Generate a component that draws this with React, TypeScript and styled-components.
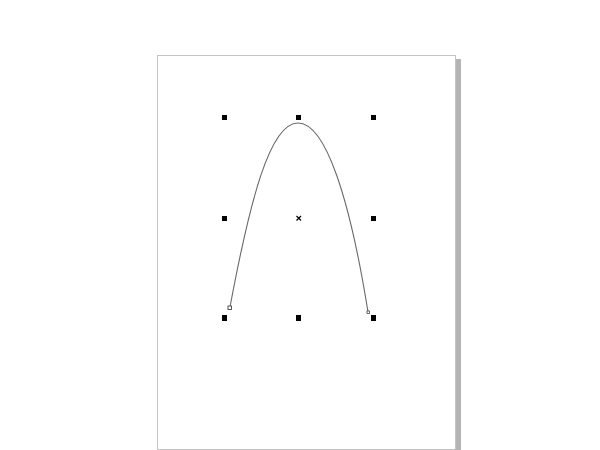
import React from "react";
import styled, { createGlobalStyle } from "styled-components";

const Global = createGlobalStyle`
  html, body { margin: 0; padding: 0; background: #ffffff; overflow: hidden; }
  body { font-family: "Liberation Sans", Arial, sans-serif; }
`;

const Desk = styled.div`
  width: 600px;
  height: 450px;
  background: #ffffff;
  padding: 55px 0 0 157px;
  box-sizing: border-box;
  overflow: hidden;
`;

const Page = styled.div`
  width: 299px;
  height: 395px;
  box-sizing: border-box;
  border: 1px solid #c4c4c4;
  background: #ffffff;
  box-shadow: 5px 4px 0 0 #b4b4b4;
`;

const Canvas = styled.svg`
  display: block;
  width: 297px;
  height: 393px;
`;

const handles: Array<[number, number, number]> = [
  [222, 115, 5],
  [296, 115, 5],
  [371, 115, 5],
  [222, 216, 5],
  [371, 216, 5],
  [222, 315, 6],
  [296, 315, 6],
  [371, 315, 6],
];

export default function App() {
  return (
    <>
      <Global />
      <Desk>
        <Page>
          <Canvas viewBox="158 56 297 393">
            <path
              d="M230 307 C 250 200, 270 123, 298 123 C 326 123, 350 200, 368 312"
              fill="none"
              stroke="#6a6a6a"
              strokeWidth="1.1"
            />
            <rect x="228" y="306" width="3.5" height="3.5" fill="#fff" stroke="#444" strokeWidth="0.9" />
            <rect x="367" y="311" width="2.5" height="2.5" fill="#fff" stroke="#444" strokeWidth="0.8" />
            {handles.map(([x, y, h], i) => (
              <rect key={i} x={x} y={y} width={5} height={h} fill="#000" />
            ))}
            <path d="M296.5 216 L301 220.5 M301 216 L296.5 220.5" stroke="#000" strokeWidth="1.2" />
          </Canvas>
        </Page>
      </Desk>
    </>
  );
}
